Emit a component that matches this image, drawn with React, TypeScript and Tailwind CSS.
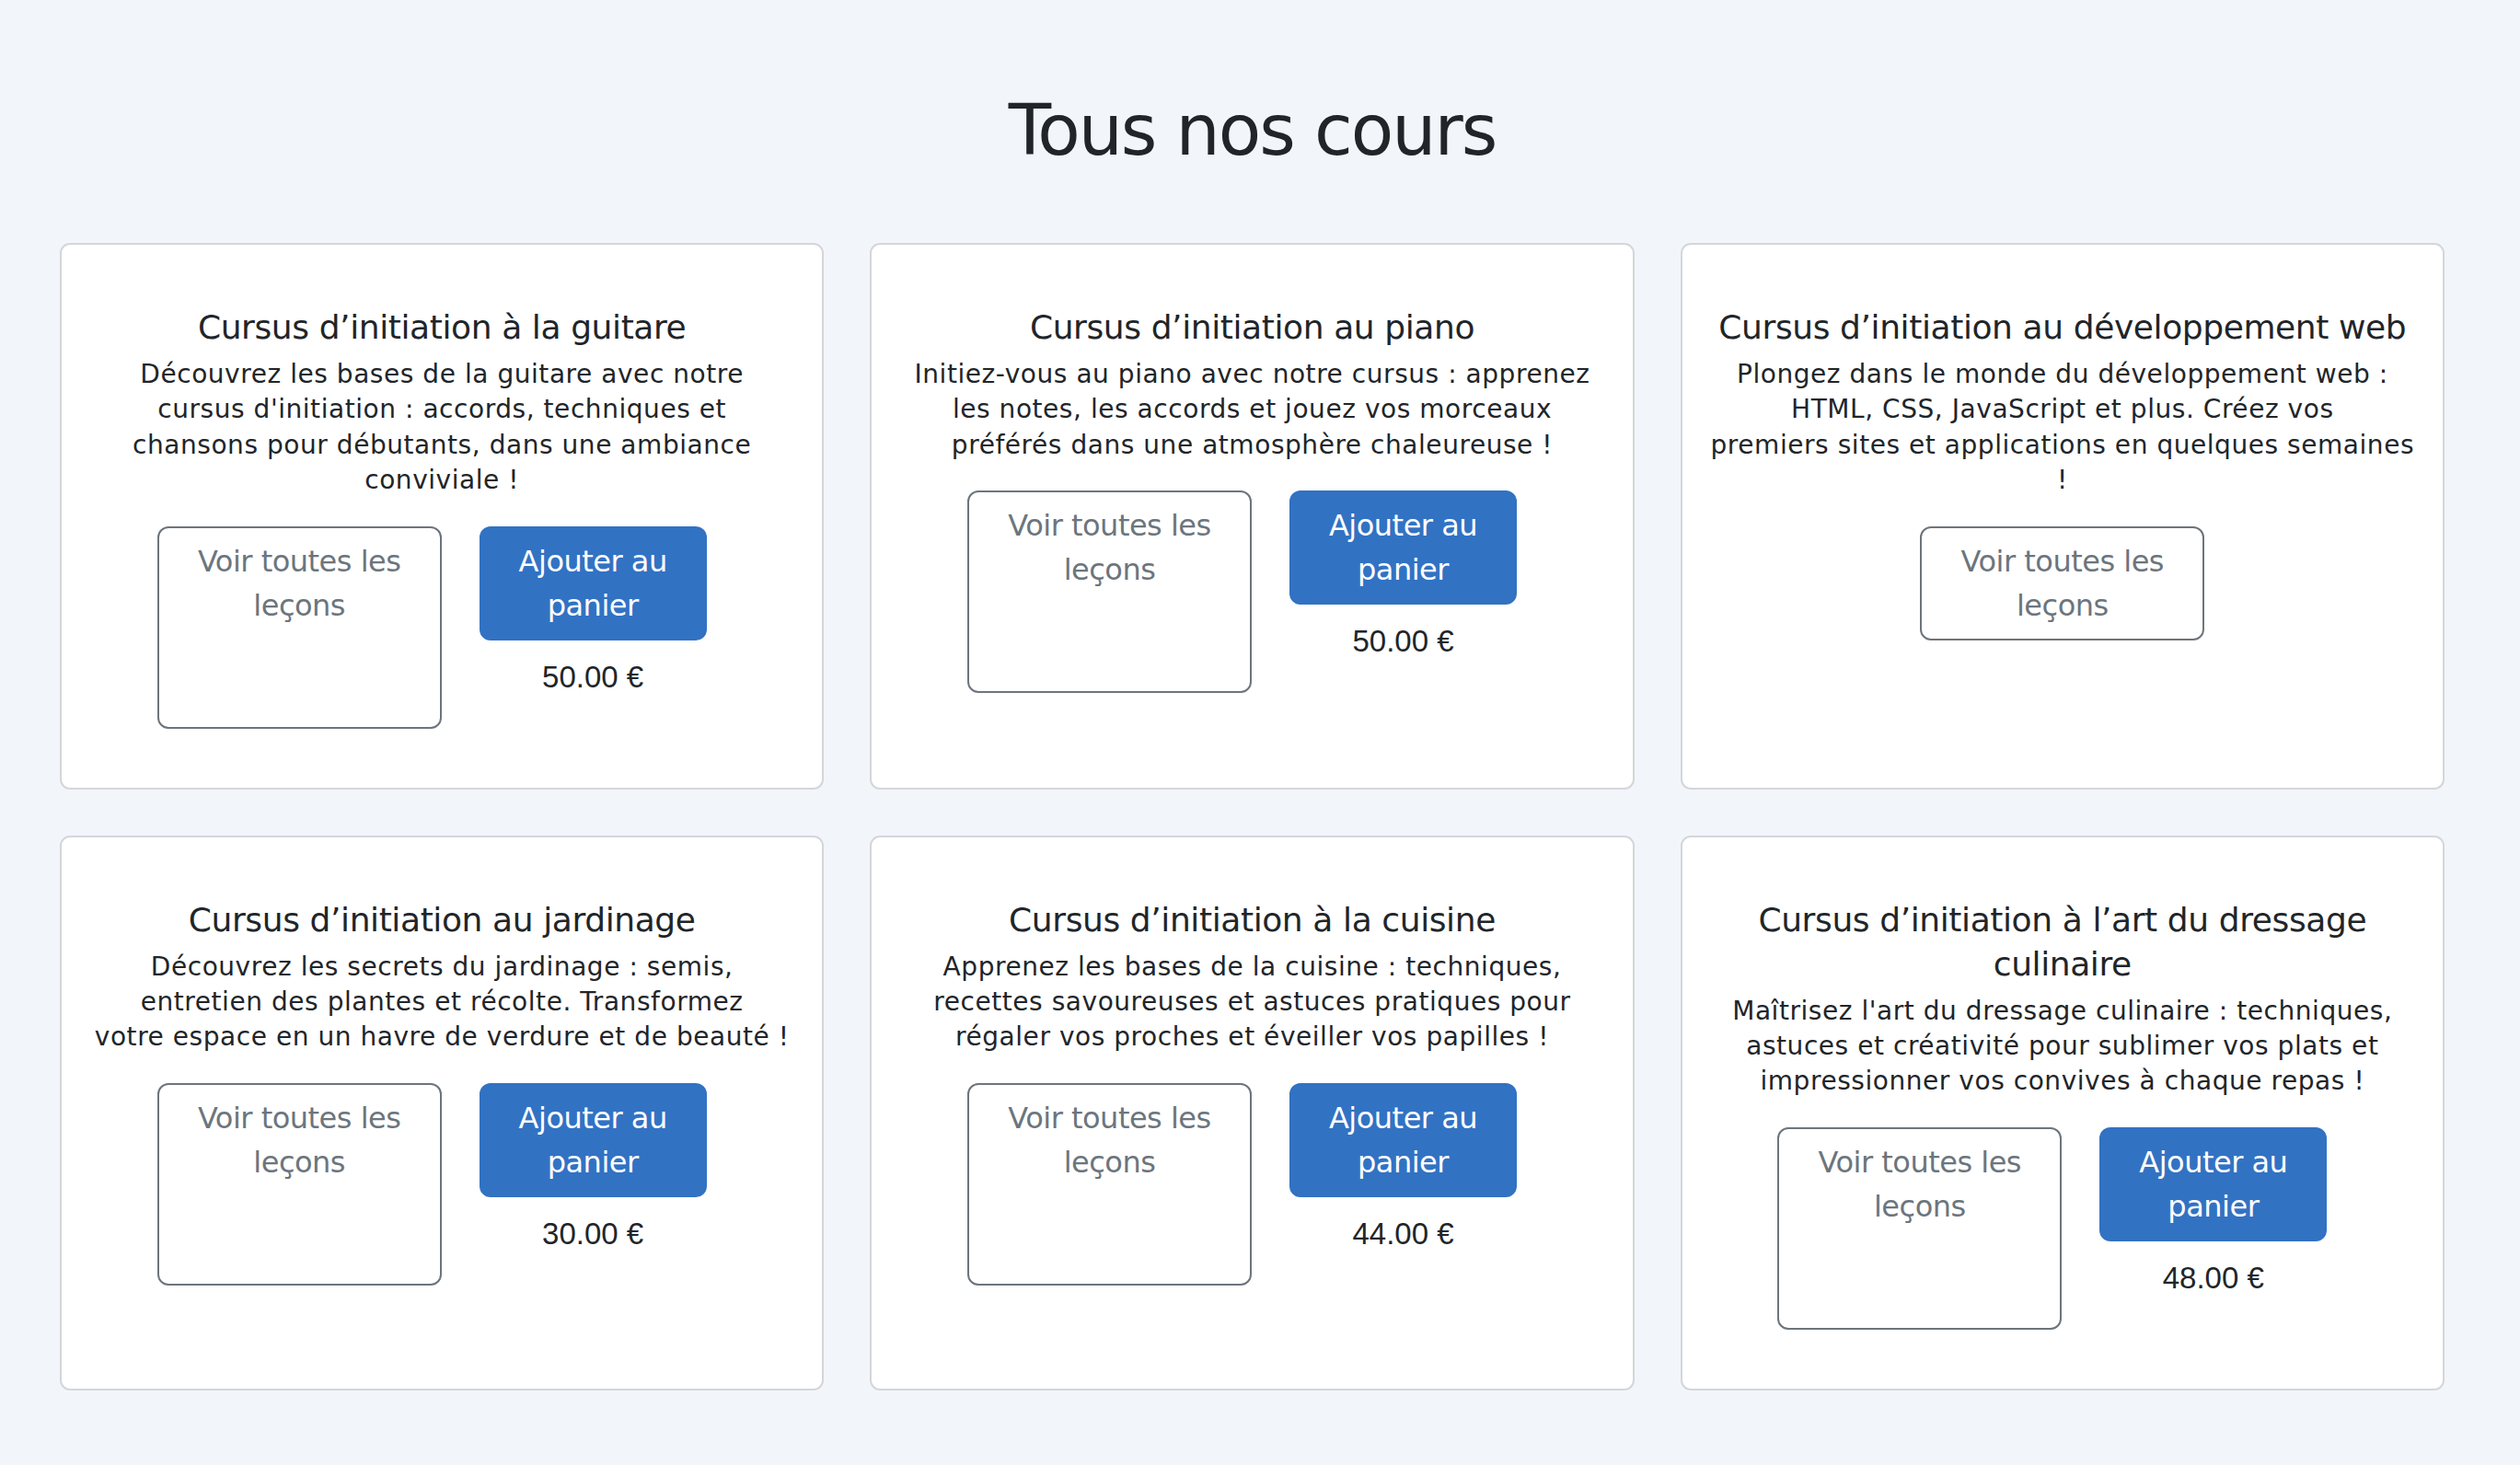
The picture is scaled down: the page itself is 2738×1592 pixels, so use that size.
import React from "react";

type Course = { title: string; lines: string[]; price: string | null };

const courses: Course[] = [
  {
    title: "Cursus d’initiation à la guitare",
    lines: [
      "Découvrez les bases de la guitare avec notre",
      "cursus d'initiation : accords, techniques et",
      "chansons pour débutants, dans une ambiance",
      "conviviale !",
    ],
    price: "50.00 €",
  },
  {
    title: "Cursus d’initiation au piano",
    lines: [
      "Initiez-vous au piano avec notre cursus : apprenez",
      "les notes, les accords et jouez vos morceaux",
      "préférés dans une atmosphère chaleureuse !",
    ],
    price: "50.00 €",
  },
  {
    title: "Cursus d’initiation au développement web",
    lines: [
      "Plongez dans le monde du développement web :",
      "HTML, CSS, JavaScript et plus. Créez vos",
      "premiers sites et applications en quelques semaines",
      "!",
    ],
    price: null,
  },
  {
    title: "Cursus d’initiation au jardinage",
    lines: [
      "Découvrez les secrets du jardinage : semis,",
      "entretien des plantes et récolte. Transformez",
      "votre espace en un havre de verdure et de beauté !",
    ],
    price: "30.00 €",
  },
  {
    title: "Cursus d’initiation à la cuisine",
    lines: [
      "Apprenez les bases de la cuisine : techniques,",
      "recettes savoureuses et astuces pratiques pour",
      "régaler vos proches et éveiller vos papilles !",
    ],
    price: "44.00 €",
  },
  {
    title: "Cursus d’initiation à l’art du dressage culinaire",
    lines: [
      "Maîtrisez l'art du dressage culinaire : techniques,",
      "astuces et créativité pour sublimer vos plats et",
      "impressionner vos convives à chaque repas !",
    ],
    price: "48.00 €",
  },
];

function Card({ c }: { c: Course }) {
  return (
    <div className="bg-white border-2 border-[#d4d6d9] rounded-[11px] pt-[66px] pb-[64px] px-[30px] text-center text-[#212529]">
      <h5 className="text-[36px] leading-[48px] tracking-[-0.4px] font-normal mb-[8px]">{c.title}</h5>
      <p className="text-[28px] leading-[38.4px] tracking-[0.55px] mb-[30px]">
        {c.lines.map((l, i) => (
          <React.Fragment key={i}>
            {i > 0 && <br />}
            <span className="whitespace-nowrap">{l}</span>
          </React.Fragment>
        ))}
      </p>
      <div className="flex justify-center items-stretch gap-[41px]">
        <a
          href="#"
          className="block w-[309px] border-2 border-[#6c757d] rounded-[12px] px-[24px] py-[12px] text-[32px] leading-[48px] tracking-[-0.5px] text-[#6c757d] text-center"
        >
          Voir toutes les leçons
        </a>
        {c.price && (
          <div className="flex flex-col items-center mr-[22px]">
            <button className="w-[247px] bg-[#3272c3] border-2 border-[#3272c3] rounded-[12px] px-[24px] py-[12px] text-[32px] leading-[48px] tracking-[-0.5px] text-white text-center">
              Ajouter au panier
            </button>
            <p
              className="mt-[16px] mb-[32px] text-[33px] leading-[48px] text-[#212529]"
              style={{ fontFamily: '"Liberation Sans", Arial, sans-serif' }}
            >
              {c.price}
            </p>
          </div>
        )}
      </div>
    </div>
  );
}

export default function App() {
  return (
    <div
      className="min-h-screen bg-[#f2f6fa] pt-[94px] pb-[80px] pl-[65px] pr-[82px]"
      style={{ fontFamily: '"DejaVu Sans", "Liberation Sans", sans-serif' }}
    >
      <h1 className="text-center text-[76px] leading-[96px] tracking-[-2px] font-normal text-[#212529] mb-[74px]">
        Tous nos cours
      </h1>
      <div className="grid grid-cols-3 gap-[50px]">
        {courses.map((c, i) => (
          <Card key={i} c={c} />
        ))}
      </div>
    </div>
  );
}
